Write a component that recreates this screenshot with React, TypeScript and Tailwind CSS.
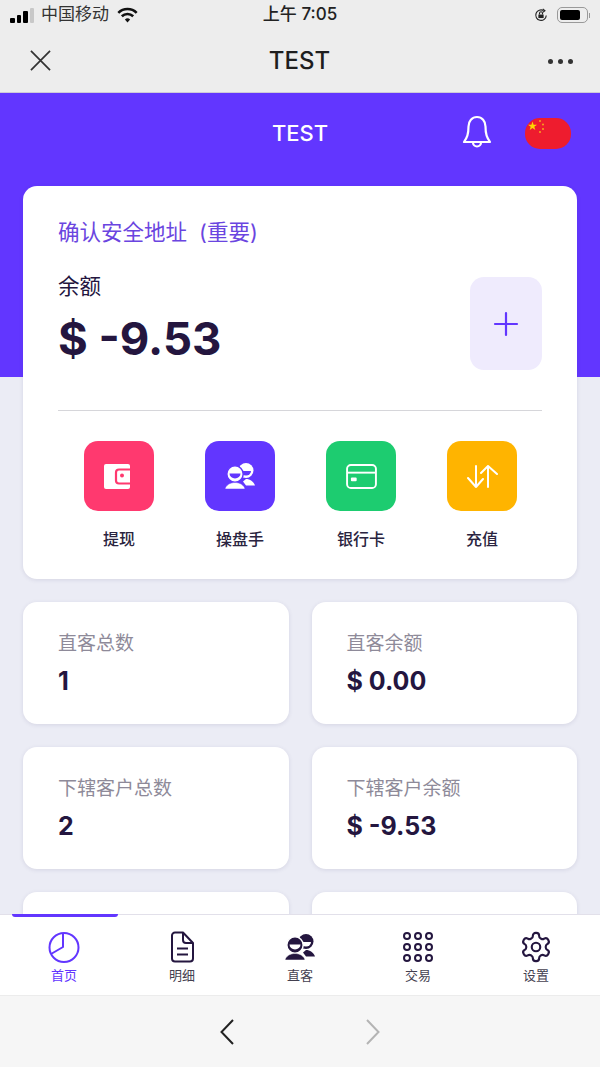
import { ReactNode } from "react";

const sans = "font-['Inter','Noto_Sans_CJK_SC',sans-serif]";

function PeopleIcon({ className, cut }: { className?: string; cut: string }) {
  return (
    <svg viewBox="0 0 30 26" className={className} fill="currentColor">
      {/* back person */}
      <circle cx="21" cy="7.5" r="7.5" />
      <path d="M16 8h10a5 4.500 0 0 1-10 0z" fill={cut} />
      <path d="M21 16c4 0 7.500 2.500 9 6.500H21l-3-4z" />
      {/* front person */}
      <circle cx="10" cy="11" r="8.200" stroke={cut} strokeWidth="1.500" />
      <path d="M4.500 10.500h11a5.500 5 0 0 1-11 0z" fill={cut} />
      <path d="M0 26c1-4 5-6.500 10-6.500s9 2.500 10 6.500z" stroke={cut} strokeWidth="0.500" />
    </svg>
  );
}

function Shortcut({ color, label, children }: { color: string; label: string; children: ReactNode }) {
  return (
    <div className="flex w-[70px] flex-col items-center">
      <div className={`flex h-[70px] w-[70px] items-center justify-center rounded-[14px] text-white ${color}`}>
        {children}
      </div>
      <div className="mt-[18px] whitespace-nowrap text-[16px] font-medium leading-[20px] text-[#2a2440]">{label}</div>
    </div>
  );
}

function StatCard({ label, value }: { label: string; value: string }) {
  return (
    <div className="h-[122px] rounded-[14px] bg-white pl-[35px] pt-[30px] shadow-[0_1px_4px_rgba(60,50,110,0.12)]">
      <div className="text-[19px] leading-[24px] text-[#8e8a99]">{label}</div>
      <div className="mt-[9px] text-[25px] font-bold leading-[32px] text-[#24163f]">{value}</div>
    </div>
  );
}

function NavItem({ label, active, children }: { label: string; active?: boolean; children: ReactNode }) {
  return (
    <div className="relative flex flex-1 flex-col items-center pt-[16px]">
      {active && <div className="absolute left-[7px] top-[-1px] h-[3px] w-[106px] rounded-b-sm bg-[#6236ff]" />}
      <div className="flex h-[32px] items-center justify-center">{children}</div>
      <div className={`mt-[3px] text-[13px] leading-[18px] ${active ? "text-[#6236ff]" : "text-[#444050]"}`}>{label}</div>
    </div>
  );
}

export default function App() {
  return (
    <div className={`relative flex h-[1067px] w-[600px] flex-col overflow-hidden bg-[#ebecf5] ${sans}`}>
      {/* Status bar */}
      <div className="flex h-[30px] items-center justify-between bg-[#ededed] pl-[10px] pr-[10px]">
        <div className="flex w-[200px] items-center">
          <div className="flex items-end gap-[2px]">
            <div className="h-[5px] w-[4.500px] rounded-[1px] bg-black" />
            <div className="h-[8px] w-[4.500px] rounded-[1px] bg-black" />
            <div className="h-[12px] w-[4.500px] rounded-[1px] bg-black" />
            <div className="h-[15px] w-[4.500px] rounded-[1px] bg-[#c8c8c8]" />
          </div>
          <span className="ml-[7px] text-[17px] text-[#333]">中国移动</span>
          <svg viewBox="0 0 24 18" className="ml-[8px] h-[16px] w-[21px]" fill="none" stroke="#111" strokeWidth="3">
            <path d="M1.500 6.500a15 15 0 0 1 21 0" />
            <path d="M5.500 10.500a9.500 9.500 0 0 1 13 0" />
            <path d="M12 17.500l-3-3.500a4.500 4.500 0 0 1 6 0z" fill="#111" stroke="none" />
          </svg>
        </div>
        <div className="text-[17px] font-medium text-[#222]">上午 7:05</div>
        <div className="flex w-[200px] items-center justify-end">
          <svg viewBox="0 0 16 16" className="h-[14px] w-[14px]" fill="none" stroke="#222" strokeWidth="1.300">
            <path d="M14 8.500A6 6 0 1 1 11 3" />
            <path d="M10 1l2.500 2-2.500 2" />
            <rect x="5" y="7.500" width="6" height="4" fill="#222" stroke="none" />
            <path d="M6.300 7.500V6a1.700 1.700 0 0 1 3.400 0v1.500" />
          </svg>
          <div className="ml-[9px] flex h-[16px] w-[31px] items-center rounded-[5px] border border-[#999] p-[2px]">
            <div className="h-full w-[20px] rounded-[2px] bg-black" />
          </div>
          <div className="ml-[1px] h-[5px] w-[1px] bg-[#999]" />
        </div>
      </div>

      {/* WeChat title bar */}
      <div className="flex h-[63px] items-center justify-between border-b border-[#cfcad8] bg-[#ededed] pl-[30px] pr-[27px]">
        <svg viewBox="0 0 22 22" className="mb-[2px] h-[21px] w-[21px]" fill="none" stroke="#333" strokeWidth="1.800">
          <path d="M1 1l20 20M21 1L1 21" />
        </svg>
        <div className="text-[24px] font-medium text-[#1e1e1e]">TEST</div>
        <div className="flex gap-[5px]">
          <div className="h-[5px] w-[5px] rounded-full bg-[#333]" />
          <div className="h-[5px] w-[5px] rounded-full bg-[#333]" />
          <div className="h-[5px] w-[5px] rounded-full bg-[#333]" />
        </div>
      </div>

      {/* Purple header */}
      <div className="relative h-[284px] bg-[#6236ff]">
        <div className="pt-[24px] text-center text-[22px] font-medium leading-[32px] text-white">TEST</div>
        <svg viewBox="0 0 30 36" className="absolute left-[462px] top-[22px] h-[36px] w-[30px]" fill="none" stroke="white" strokeWidth="2.200" strokeLinejoin="round">
          <path d="M15 2c-5 0-8.500 4-8.500 9.500 0 8-1.500 11-4.500 15.500h26c-3-4.500-4.500-7.500-4.500-15.500C23.500 6 20 2 15 2z" />
          <path d="M11 27.500a4 4 0 0 0 8 0" />
        </svg>
        <div className="absolute left-[525px] top-[25px] h-[31px] w-[46px] overflow-hidden rounded-[15px] bg-[#ee1c2e]">
          <svg viewBox="0 0 46 31" className="h-full w-full" fill="#ffd800">
            <path d="M7.500 3.500l1.100 3.200 3.400.1-2.700 2 1 3.200-2.800-1.900-2.800 1.900 1-3.200-2.700-2 3.400-.1z" />
            <circle cx="15" cy="3" r="1" fill="#f7a51e" />
            <circle cx="18" cy="6.500" r="1" fill="#f7a51e" />
            <circle cx="18" cy="11" r="1" fill="#f7a51e" />
            <circle cx="15" cy="14" r="1" fill="#f7a51e" />
          </svg>
        </div>
      </div>

      {/* Content */}
      <div className="relative mt-[-191px] flex flex-col gap-[23px] px-[23px]">
        <div className="h-[393px] rounded-[14px] bg-white px-[35px] pt-[30px] shadow-[0_1px_4px_rgba(60,50,110,0.12)]">
          <div className="text-[21.500px] leading-[32px] text-[#6a45e0] [word-spacing:6px]">确认安全地址 (重要)</div>
          <div className="mt-[24px] flex items-start justify-between">
            <div>
              <div className="text-[21.500px] leading-[28px] text-[#24163f]">余额</div>
              <div className="mt-[12px] text-[45.500px] font-bold leading-[54px] text-[#24163f]">$ -9.53</div>
            </div>
            <div className="mt-[5px] flex h-[93px] w-[72px] items-center justify-center rounded-[14px] bg-[#efebfd]">
              <svg viewBox="0 0 26 26" className="h-[26px] w-[26px]" fill="none" stroke="#6236ff" strokeWidth="2.200" strokeLinecap="round">
                <path d="M13 2v22M2 13h22" />
              </svg>
            </div>
          </div>
          <div className="mt-[40px] h-px bg-[#d6d6da]" />
          <div className="mt-[30px] flex justify-between pl-[26px] pr-[25px]">
            <Shortcut color="bg-[#ff396f]" label="提现">
              <svg viewBox="0 0 30 25" className="h-[25px] w-[30px]">
                <rect x="0" y="0" width="26" height="25" rx="2" fill="white" />
                <path d="M26 5.500H15a3 3 0 0 0-3 3v8a3 3 0 0 0 3 3h11" fill="none" stroke="#ff396f" strokeWidth="2.200" />
                <circle cx="18" cy="11.500" r="2" fill="#ff396f" />
              </svg>
            </Shortcut>
            <Shortcut color="bg-[#6236ff]" label="操盘手">
              <PeopleIcon className="h-[26px] w-[30px]" cut="#6236ff" />
            </Shortcut>
            <Shortcut color="bg-[#1dcc70]" label="银行卡">
              <svg viewBox="0 0 32 26" className="h-[25px] w-[31px]" fill="none" stroke="white" strokeWidth="2">
                <rect x="1" y="1" width="30" height="24" rx="4" />
                <path d="M1 9h30" />
                <rect x="5" y="14" width="6" height="4" rx="1" fill="white" stroke="none" />
              </svg>
            </Shortcut>
            <Shortcut color="bg-[#ffb400]" label="充值">
              <svg viewBox="-1 -1 31 23" className="h-[23px] w-[31px]" fill="none" stroke="white" strokeWidth="2" strokeLinecap="round" strokeLinejoin="round">
                <path d="M8 0v21M0 12l8 9 7-8" />
                <path d="M20 21V0M13 7l7-7 9 8" />
              </svg>
            </Shortcut>
          </div>
        </div>

        <div className="grid grid-cols-2 gap-[23px]">
          <StatCard label="直客总数" value="1" />
          <StatCard label="直客余额" value="$ 0.00" />
          <StatCard label="下辖客户总数" value="2" />
          <StatCard label="下辖客户余额" value="$ -9.53" />
          <StatCard label="" value="" />
          <StatCard label="" value="" />
        </div>
      </div>

      {/* Bottom tabs */}
      <div className="absolute bottom-[72px] left-0 right-0 flex h-[81px] border-t border-[#e2e0ea] bg-white px-[5px]">
        <NavItem label="首页" active>
          <svg viewBox="0 0 32 32" className="h-[32px] w-[32px]" fill="none" stroke="#6236ff" strokeWidth="2" strokeLinejoin="round">
            <circle cx="16" cy="16.500" r="14.500" />
            <path d="M15 2v14L3 23" />
          </svg>
        </NavItem>
        <NavItem label="明细">
          <svg viewBox="0 0 24 32" className="h-[32px] w-[24px]" fill="none" stroke="#24163f" strokeWidth="2" strokeLinejoin="round">
            <path d="M5 1.500h8L23 12v15.500a3 3 0 0 1-3 3H5a3 3 0 0 1-3-3v-23a3 3 0 0 1 3-3z" />
            <path d="M13 1.500V9a3 3 0 0 0 3 3h7" />
            <path d="M7 17.500h11M7 23.500h11" />
          </svg>
        </NavItem>
        <NavItem label="直客">
          <PeopleIcon className="h-[26px] w-[30px] text-[#24163f]" cut="white" />
        </NavItem>
        <NavItem label="交易">
          <div className="grid grid-cols-3 gap-[3px]">
            {[0, 1, 2, 3, 4, 5, 6, 7, 8].map((i) => (
              <div key={i} className="h-[8px] w-[8px] rounded-full border-2 border-[#24163f]" />
            ))}
          </div>
        </NavItem>
        <NavItem label="设置">
          <svg viewBox="0 0 24 24" className="mr-[1px] h-[34px] w-[34px]" fill="none" stroke="#24163f" strokeWidth="1.500" strokeLinecap="round" strokeLinejoin="round">
            <path d="M12.220 2h-.44a2 2 0 0 0-2 2v.18a2 2 0 0 1-1 1.730l-.43.250a2 2 0 0 1-2 0l-.15-.080a2 2 0 0 0-2.730.730l-.22.380a2 2 0 0 0 .730 2.730l.15.100a2 2 0 0 1 1 1.720v.510a2 2 0 0 1-1 1.740l-.15.090a2 2 0 0 0-.730 2.730l.22.380a2 2 0 0 0 2.730.730l.15-.080a2 2 0 0 1 2 0l.43.250a2 2 0 0 1 1 1.730V20a2 2 0 0 0 2 2h.44a2 2 0 0 0 2-2v-.18a2 2 0 0 1 1-1.730l.43-.250a2 2 0 0 1 2 0l.15.080a2 2 0 0 0 2.730-.730l.22-.390a2 2 0 0 0-.730-2.730l-.15-.080a2 2 0 0 1-1-1.740v-.5a2 2 0 0 1 1-1.740l.15-.090a2 2 0 0 0 .730-2.730l-.22-.380a2 2 0 0 0-2.730-.730l-.15.080a2 2 0 0 1-2 0l-.43-.250a2 2 0 0 1-1-1.730V4a2 2 0 0 0-2-2z" />
            <circle cx="12" cy="12" r="3" />
          </svg>
        </NavItem>
      </div>

      {/* Browser bar */}
      <div className="absolute bottom-0 left-0 right-0 flex h-[72px] items-center justify-center gap-[132px] border-t border-[#ececec] bg-[#f6f6f6]">
        <svg viewBox="0 0 14 26" className="h-[26px] w-[14px]" fill="none" stroke="#222" strokeWidth="2">
          <path d="M13 1L1.500 13 13 25" />
        </svg>
        <svg viewBox="0 0 14 26" className="h-[26px] w-[14px]" fill="none" stroke="#b4b4b4" strokeWidth="2">
          <path d="M1 1l11.500 12L1 25" />
        </svg>
      </div>
    </div>
  );
}
